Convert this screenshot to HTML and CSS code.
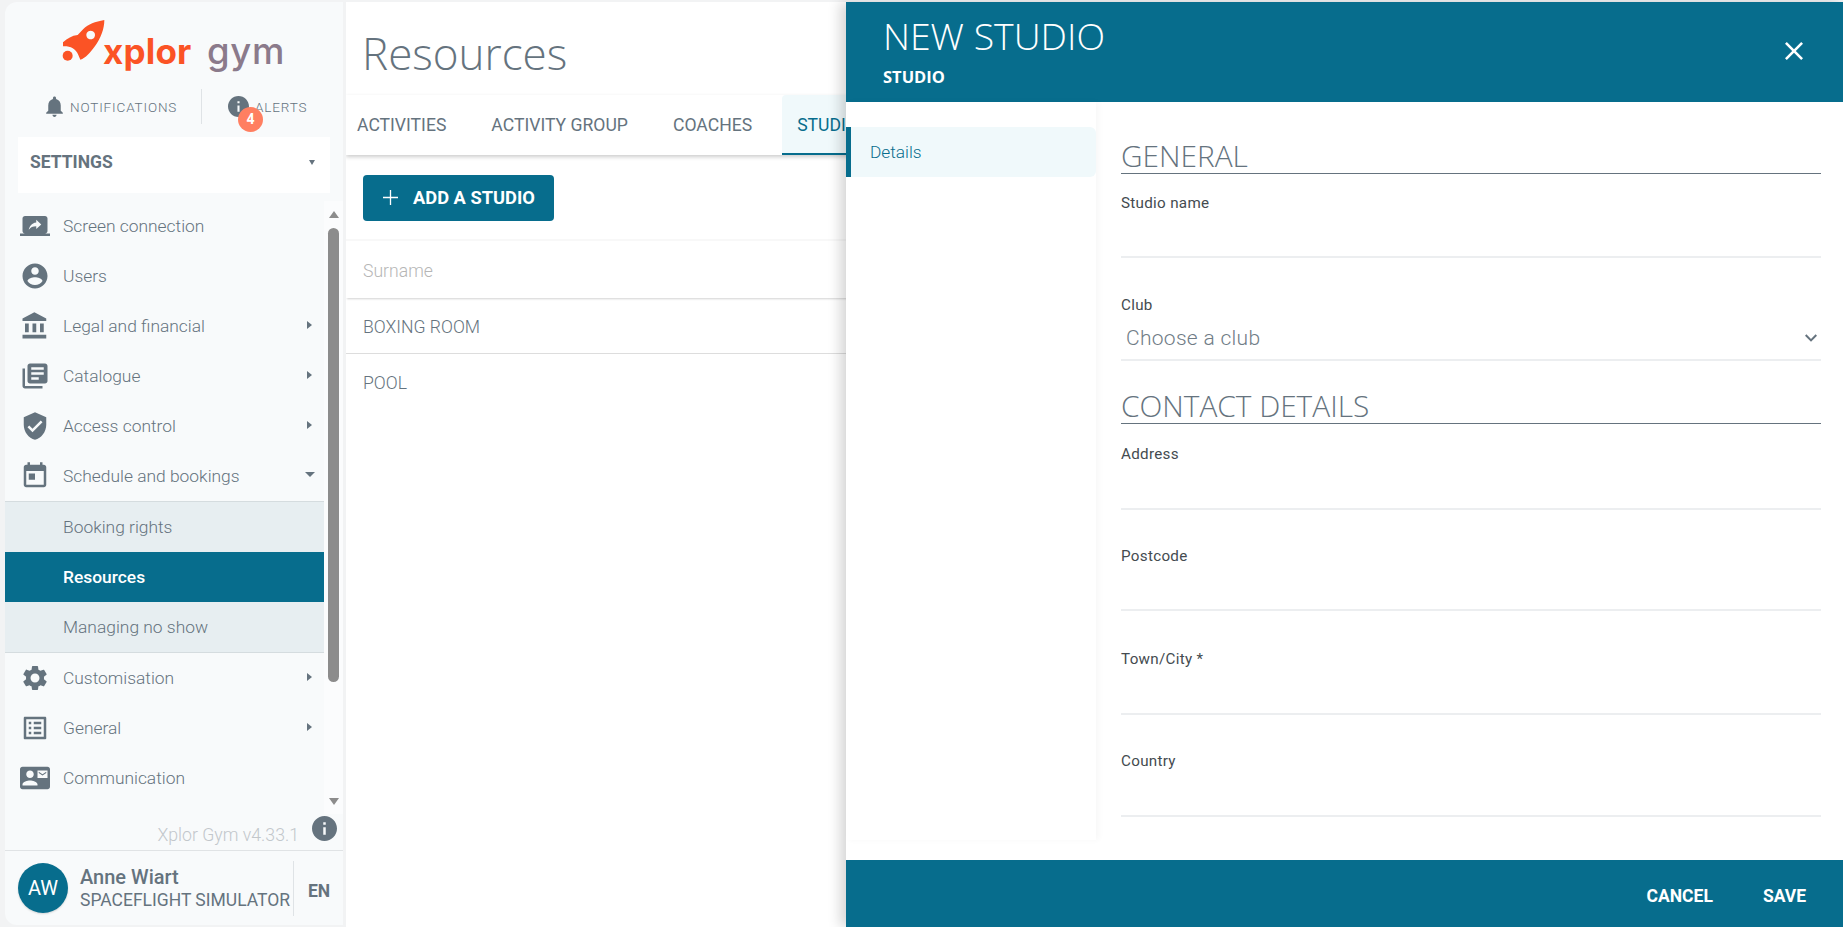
FILE: index.html
```html
<!DOCTYPE html>
<html lang="en">
<head>
<meta charset="utf-8">
<title>Resources</title>
<link rel="stylesheet" href="styles.css">
</head>
<body>
<div class="app">
  <aside class="sidebar">
    <div class="logo">
      <svg class="rocket" viewBox="0 0 195 165"><path fill-rule="evenodd" d="M148 15C120 20 100 28 85 42L68 60C50 62 38 70 24 82L24 94C45 93 62 100 70 120L76 134C92 130 106 112 118 96C138 70 148 40 148 15ZM107 47a13 13 0 1 0 .01 0Z"/><circle cx="38" cy="122" r="15"/></svg>
      <span class="logo-x">xplor</span><span class="logo-g">gym</span>
    </div>
    <div class="alerts">
      <div class="alert-item">
        <svg class="ic-bell" viewBox="0 0 24 24"><path d="M12 22c1.1 0 2-.9 2-2h-4c0 1.1.89 2 2 2zm6-6v-5c0-3.07-1.64-5.64-4.5-6.32V4c0-.83-.67-1.5-1.5-1.5s-1.5.67-1.5 1.5v.68C7.63 5.36 6 7.92 6 11v5l-2 2v1h16v-1l-2-2z"/></svg>
        <span>NOTIFICATIONS</span>
      </div>
      <div class="alert-sep"></div>
      <div class="alert-item alert-two">
        <svg class="ic-info" viewBox="2 2 20 20"><path d="M12 2C6.48 2 2 6.48 2 12s4.48 10 10 10 10-4.48 10-10S17.52 2 12 2zm1 15h-2v-6h2v6zm0-8h-2V7h2v2z"/></svg>
        <span>ALERTS</span>
        <b class="badge">4</b>
      </div>
    </div>
    <div class="select"><span>SETTINGS</span><i class="tri-down small"></i></div>
    <div class="nav-wrap">
      <nav class="nav">
        <a class="row"><svg viewBox="0 0 24 24"><path d="M20 18c1.1 0 1.99-.9 1.99-2L22 6c0-1.11-.9-2-2-2H4c-1.11 0-2 .89-2 2v10c0 1.1.89 2 2 2H0v2h24v-2h-4zm-7-3.53v-2.19c-2.78 0-4.61.85-6 2.72.56-2.67 2.11-5.33 6-5.87V7l4 3.73-4 3.74z"/></svg><span>Screen connection</span></a>
        <a class="row"><svg viewBox="0 0 24 24"><path d="M12 2C6.48 2 2 6.48 2 12s4.48 10 10 10 10-4.48 10-10S17.52 2 12 2zm0 3c1.66 0 3 1.34 3 3s-1.34 3-3 3-3-1.34-3-3 1.34-3 3-3zm0 14.2c-2.5 0-4.71-1.28-6-3.22.03-1.99 4-3.08 6-3.08 1.99 0 5.97 1.09 6 3.08-1.29 1.94-3.5 3.22-6 3.22z"/></svg><span>Users</span></a>
        <a class="row"><svg viewBox="0 0 24 24"><path d="M4 10v7h3v-7H4zm6 0v7h3v-7h-3zM2 22h19v-3H2v3zm14-12v7h3v-7h-3zm-4.5-9L2 6v2h19V6l-9.5-5z"/></svg><span>Legal and financial</span><i class="tri-right"></i></a>
        <a class="row"><svg viewBox="0 0 24 24"><path d="M4 6H2v14c0 1.1.9 2 2 2h14v-2H4V6zm16-4H8c-1.1 0-2 .9-2 2v12c0 1.1.9 2 2 2h12c1.1 0 2-.9 2-2V4c0-1.1-.9-2-2-2zm-1 9H9V9h10v2zm-4 4H9v-2h6v2zm4-8H9V5h10v2z"/></svg><span>Catalogue</span><i class="tri-right"></i></a>
        <a class="row"><svg viewBox="0 0 24 24"><path d="M12 1L3 5v6c0 5.55 3.84 10.74 9 12 5.16-1.26 9-6.45 9-12V5l-9-4zm-2 16l-4-4 1.41-1.41L10 14.17l6.59-6.59L18 9l-8 8z"/></svg><span>Access control</span><i class="tri-right"></i></a>
        <a class="row"><svg viewBox="0 0 24 24"><path d="M19 3h-1V1h-2v2H8V1H6v2H5c-1.11 0-1.99.9-1.99 2L3 19c0 1.1.89 2 2 2h14c1.1 0 2-.9 2-2V5c0-1.1-.9-2-2-2zm0 16H5V8h14v11zM7 10h5v5H7z"/></svg><span>Schedule and bookings</span><i class="tri-down"></i></a>
        <div class="sub">
          <a class="sub-row">Booking rights</a>
          <a class="sub-row active">Resources</a>
          <a class="sub-row">Managing no show</a>
        </div>
        <a class="row"><svg viewBox="0 0 24 24"><path d="M19.14 12.94c.04-.3.06-.61.06-.94 0-.32-.02-.64-.07-.94l2.03-1.58c.18-.14.23-.41.12-.61l-1.92-3.32c-.12-.22-.37-.29-.59-.22l-2.39.96c-.5-.38-1.03-.7-1.62-.94l-.36-2.54c-.04-.24-.24-.41-.48-.41h-3.84c-.24 0-.43.17-.47.41l-.36 2.54c-.59.24-1.13.57-1.62.94l-2.39-.96c-.22-.08-.47 0-.59.22L2.74 8.87c-.12.21-.08.47.12.61l2.03 1.58c-.05.3-.09.63-.09.94s.02.64.07.94l-2.03 1.58c-.18.14-.23.41-.12.61l1.92 3.32c.12.22.37.29.59.22l2.39-.96c.5.38 1.03.7 1.62.94l.36 2.54c.05.24.24.41.48.41h3.84c.24 0 .44-.17.47-.41l.36-2.54c.59-.24 1.13-.56 1.62-.94l2.39.96c.22.08.47 0 .59-.22l1.92-3.32c.12-.22.07-.47-.12-.61l-2.01-1.58zM12 15.6c-1.98 0-3.6-1.62-3.6-3.6s1.62-3.6 3.6-3.6 3.6 1.62 3.6 3.6-1.62 3.6-3.6 3.6z"/></svg><span>Customisation</span><i class="tri-right"></i></a>
        <a class="row"><svg viewBox="0 0 24 24"><path d="M19 5v14H5V5h14m1.1-2H3.9c-.5 0-.9.4-.9.9v16.2c0 .4.4.9.9.9h16.2c.4 0 .9-.5.9-.9V3.9c0-.5-.5-.9-.9-.9zM11 7h6v2h-6V7zm0 4h6v2h-6v-2zm0 4h6v2h-6v-2zM7 7h2v2H7V7zm0 4h2v2H7v-2zm0 4h2v2H7v-2z"/></svg><span>General</span><i class="tri-right"></i></a>
        <a class="row"><svg viewBox="0 0 24 24"><path d="M21 8V7l-3 2-3-2v1l3 2 3-2zm1-5H2C.9 3 0 3.9 0 5v14c0 1.1.9 2 2 2h20c1.1 0 1.99-.9 1.99-2L24 5c0-1.1-.9-2-2-2zM8 6c1.66 0 3 1.34 3 3s-1.34 3-3 3-3-1.34-3-3 1.34-3 3-3zm6 12H2v-1c0-2 4-3.1 6-3.1s6 1.1 6 3.1v1zm8-6h-8V6h8v6z"/></svg><span>Communication</span></a>
      </nav>
      <div class="scroll">
        <i class="sb-up"></i>
        <div class="sb-thumb"></div>
        <i class="sb-down"></i>
      </div>
    </div>
    <div class="version">
      <span>Xplor Gym v4.33.1</span>
      <svg class="ic-ver" viewBox="2 2 20 20"><path d="M12 2C6.48 2 2 6.48 2 12s4.48 10 10 10 10-4.48 10-10S17.52 2 12 2zm1 15h-2v-6h2v6zm0-8h-2V7h2v2z"/></svg>
    </div>
    <div class="user">
      <div class="avatar">AW</div>
      <div class="user-text">
        <div class="user-name">Anne Wiart</div>
        <div class="user-club">SPACEFLIGHT SIMULATOR</div>
      </div>
      <div class="lang">EN</div>
    </div>
  </aside>

  <main class="main">
    <h1 class="title">Resources</h1>
    <div class="tabs">
      <a class="tab">ACTIVITIES</a>
      <a class="tab">ACTIVITY GROUP</a>
      <a class="tab">COACHES</a>
      <a class="tab on">STUDIOS</a>
    </div>
    <div class="toolbar">
      <button class="add"><svg viewBox="0 0 16 16"><path d="M7.3 0h1.4v7.3H16v1.4H8.700V16H7.300V8.700H0V7.300h7.300z"/></svg>ADD A STUDIO</button>
    </div>
    <div class="thead">Surname</div>
    <div class="trow">BOXING ROOM</div>
    <div class="trow">POOL</div>
  </main>

  <section class="panel">
    <header class="p-head">
      <div>
        <div class="p-title">NEW STUDIO</div>
        <div class="p-sub">STUDIO</div>
      </div>
      <svg class="p-close" viewBox="5 5 14 14"><path d="M19 6.410L17.590 5 12 10.590 6.410 5 5 6.410 10.590 12 5 17.590 6.410 19 12 13.410 17.590 19 19 17.590 13.410 12z"/></svg>
    </header>
    <div class="p-body">
      <div class="p-side"><a class="p-link">Details</a></div>
      <form class="p-form">
        <h2 class="sec">GENERAL</h2>
        <div class="field f-name"><label>Studio name</label></div>
        <div class="field f-club"><label>Club</label>
          <div class="choose"><span>Choose a club</span><svg viewBox="6 8.590 12 7.410"><path d="M16.590 8.590L12 13.170 7.410 8.590 6 10l6 6 6-6z"/></svg></div>
        </div>
        <h2 class="sec sec2">CONTACT DETAILS</h2>
        <div class="field f-a"><label>Address</label></div>
        <div class="field"><label>Postcode</label></div>
        <div class="field f-t"><label>Town/City *</label></div>
        <div class="field f-c"><label>Country</label></div>
      </form>
    </div>
    <footer class="p-foot">
      <a class="act">CANCEL</a>
      <a class="act">SAVE</a>
    </footer>
  </section>
</div>
</body>
</html>
```

FILE: styles.css
```css
* { box-sizing: border-box; }
html, body { margin: 0; height: 100%; overflow: hidden; background: #fff; }
body { font-family: Roboto, "Liberation Sans", sans-serif; color: #65737e; }
a { color: inherit; text-decoration: none; }

.app { position: relative; display: flex; height: 927px; padding: 2px 0 0 5px; background: #f2f3f4; }

/* Sidebar */
.sidebar { width: 338px; flex: none; height: 923px; background: #f8fafb; border-radius: 12px 0 0 12px; display: flex; flex-direction: column; margin-right: 3px; }
.logo { height: 78px; flex: none; display: flex; align-items: flex-start; padding: 13px 0 0 50px; }
.rocket { width: 65px; height: 55px; fill: #fb5325; flex: none; }
.logo-x { font-family: Inter, Roboto, sans-serif; font-weight: 700; font-size: 35px; line-height: 40px; letter-spacing: .2px; color: #fb5325; margin: 16px 0 0 -17px; }
.logo-g { font-family: Inter, Roboto, sans-serif; font-weight: 500; font-size: 36.5px; line-height: 40px; letter-spacing: .6px; color: #8b7a8b; margin: 16px 0 0 15.5px; }

.alerts { height: 53px; flex: none; display: flex; align-items: center; font-size: 13.5px; letter-spacing: .85px; font-weight: 300; color: #65737e; }
.alert-item { display: flex; align-items: center; position: relative; }
.alert-item:first-child { padding-left: 37px; width: 196px; }
.ic-bell { width: 25px; height: 25px; fill: #65737e; margin-right: 3px; }
.alert-sep { width: 1px; height: 35px; background: #dfe3e6; }
.alert-two { padding-left: 26px; }
.ic-info { width: 21px; height: 21px; fill: #65737e; margin-right: 6px; }
.badge { position: absolute; left: 36px; top: 11px; width: 25px; height: 25px; border-radius: 50%; background: #ff7f61; color: #fff; font-size: 14px; font-weight: 700; letter-spacing: 0; text-align: center; line-height: 25px; }

.select { height: 56px; flex: none; margin: 4px 13px 0; background: #fff; display: flex; align-items: center; justify-content: space-between; padding: 0 15px 6px 12px; font-size: 17.5px; font-weight: 700; color: #65737e; }

.nav-wrap { height: 613px; flex: none; margin-top: 8px; display: flex; }
.nav { width: 319px; flex: none; }
.row { display: flex; align-items: center; height: 50px; padding-left: 15px; font-size: 17.4px; font-weight: 300; color: #65737e; position: relative; }
.row svg { width: 30px; height: 30px; fill: #65737e; margin-right: 13px; flex: none; }
.tri-right { position: absolute; left: 302px; top: 19.5px; border-left: 5px solid #65737e; border-top: 4.5px solid transparent; border-bottom: 4.5px solid transparent; }
.tri-down { width: 0; height: 0; border-top: 5px solid #65737e; border-left: 5px solid transparent; border-right: 5px solid transparent; }
.row .tri-down { position: absolute; left: 300px; top: 21px; }
.tri-down.small { border-left-width: 3.5px; border-right-width: 3.5px; }
.sub { background: #e7eef1; border-top: 1px solid #d5dcdf; border-bottom: 1px solid #d5dcdf; }
.sub-row { display: flex; align-items: center; height: 50px; padding-left: 58px; font-size: 17.4px; font-weight: 300; color: #65737e; }
.sub-row.active { background: #076d8d; color: #fff; font-weight: 500; }

.scroll { width: 19px; background: #fbfcfd; display: flex; flex-direction: column; align-items: center; }
.sb-up { margin-top: 10px; border-bottom: 7px solid #8c8c8c; border-left: 5.5px solid transparent; border-right: 5.5px solid transparent; }
.sb-thumb { width: 11px; height: 454px; background: #8c8c8c; border-radius: 6px; margin-top: 10px; }
.sb-down { margin-top: auto; margin-bottom: 9px; border-top: 7px solid #8c8c8c; border-left: 5.5px solid transparent; border-right: 5.5px solid transparent; }

.version { height: 37px; flex: none; display: flex; align-items: center; justify-content: flex-end; border-bottom: 1px solid #e0e3e5; font-size: 17.7px; font-weight: 300; color: #c2c7cb; padding-right: 6px; }
.version span { margin: 5px 13px 0 0; }
.ic-ver { width: 25px; height: 25px; fill: #65737e; margin-top: -7px; }

.user { flex: 1; display: flex; align-items: center; padding-left: 13px; }
.avatar { width: 50px; height: 50px; border-radius: 50%; background: #076d8d; color: #fff; font-size: 20px; text-align: center; line-height: 50px; flex: none; box-shadow: 0 1px 2px rgba(0,0,0,.15); }
.user-text { margin-left: 12px; width: 213px; flex: none; margin-top: -1px; }
.user-name { font-size: 20px; font-weight: 500; line-height: 24px; color: #65737e; }
.user-club { font-size: 17.5px; font-weight: 400; line-height: 22px; white-space: nowrap; color: #65737e; }
.lang { height: 55px; border-left: 1px solid #dfe3e6; padding: 3px 0 0 14px; font-size: 17.5px; font-weight: 700; line-height: 55px; color: #65737e; }

/* Main */
.main { flex: 1; background: #fff; min-width: 0; overflow: hidden; }
.title { margin: 0; height: 93px; padding: 22px 0 0 16px; font-family: "Open Sans", sans-serif; font-weight: 300; font-size: 44px; line-height: 58px; color: #65737e; }
.tabs { height: 60px; display: flex; box-shadow: 0 2px 4px rgba(0,0,0,.2); position: relative; }
.tab { padding: 0 16px 0 11px; margin-right: 18px; font-size: 17.6px; line-height: 60px; color: #65737e; height: 60px; white-space: nowrap; }
.tab.on { background: #f0f9fb; border-bottom: 2px solid #076d8d; color: #076d8d; padding: 0 16px 0 15px; margin: 0 0 0 -4px; border-radius: 4px 4px 0 0; }
.toolbar { padding: 20px 0 0 17px; height: 86px; border-bottom: 2px solid #f8f8f8; }
.add { display: flex; align-items: center; height: 46px; width: 191px; padding: 0 0 1px 20px; border: 0; border-radius: 4px; background: #076d8d; color: #fff; font: 700 18.3px Roboto, sans-serif; white-space: nowrap; }
.add svg { width: 15px; height: 15px; fill: #fff; margin-right: 15px; flex: none; }
.thead { height: 57px; padding-left: 17px; font-size: 17.6px; font-weight: 300; line-height: 60px; color: #b6b6b6; box-shadow: 0 2px 2px -1px rgba(0,0,0,.18); position: relative; }
.trow { height: 56px; padding-left: 17px; font-size: 17.6px; font-weight: 300; line-height: 59px; color: #65737e; border-bottom: 1px solid #ddd; }
.trow:last-child { border: 0; }

/* Panel */
.panel { position: absolute; left: 846px; right: 0; top: 2px; bottom: 0; background: #fff; box-shadow: -6px 0 12px rgba(0,0,0,.16); display: flex; flex-direction: column; }
.p-head { height: 100px; flex: none; background: #076d8d; color: #fff; display: flex; justify-content: space-between; padding: 12px 40px 0 37px; }
.p-title { font-family: "Open Sans", sans-serif; font-weight: 300; font-size: 37.4px; line-height: 44px; }
.p-sub { font-family: "Open Sans", sans-serif; font-weight: 700; font-size: 16.5px; line-height: 22px; margin-top: 8px; }
.p-close { width: 18px; height: 18px; fill: #fff; margin-top: 28px; }
.p-body { flex: 1; display: flex; min-height: 0; }
.p-side { width: 250px; flex: none; padding-top: 25px; margin-bottom: 20px; box-shadow: 3px 0 6px rgba(0,0,0,.03); }
.p-link { display: block; height: 50px; background: #f0f9fb; border-left: 5px solid #076d8d; border-radius: 0 6px 6px 0; padding-left: 19px; font-size: 17.3px; font-weight: 300; line-height: 50px; color: #076d8d; }
.p-form { flex: 1; padding: 39px 22px 0 25px; }
.sec { margin: 0; height: 33px; border-bottom: 1px solid #65737e; font-family: "Open Sans", sans-serif; font-weight: 300; font-size: 29.8px; line-height: 30px; color: #65737e; white-space: nowrap; }
.field { height: 101px; border-bottom: 2px solid #eceef0; padding-top: 36px; font-size: 15.2px; color: #444b50; }
.field label { display: block; line-height: 18px; letter-spacing: .3px; margin-top: 1px; }
.f-name { height: 84px; padding-top: 19px; }
.f-club { height: 103px; padding-top: 37px; }
.choose { display: flex; justify-content: space-between; align-items: center; padding: 11px 4px 0 5px; font-size: 21px; letter-spacing: .3px; font-weight: 300; color: #6f7c86; line-height: 26px; }
.choose svg { width: 12px; height: 8px; fill: #65737e; }
.sec2 { margin-top: 30px; }
.f-a { height: 86px; padding-top: 20px; }
.f-t { height: 104px; padding-top: 38px; }
.f-c { height: 102px; }
.p-foot { height: 67px; flex: none; background: #076d8d; display: flex; justify-content: flex-end; align-items: center; padding: 4px 37px 0 0; gap: 50px; }
.act { color: #fff; font-size: 17.5px; font-weight: 700; }
```
